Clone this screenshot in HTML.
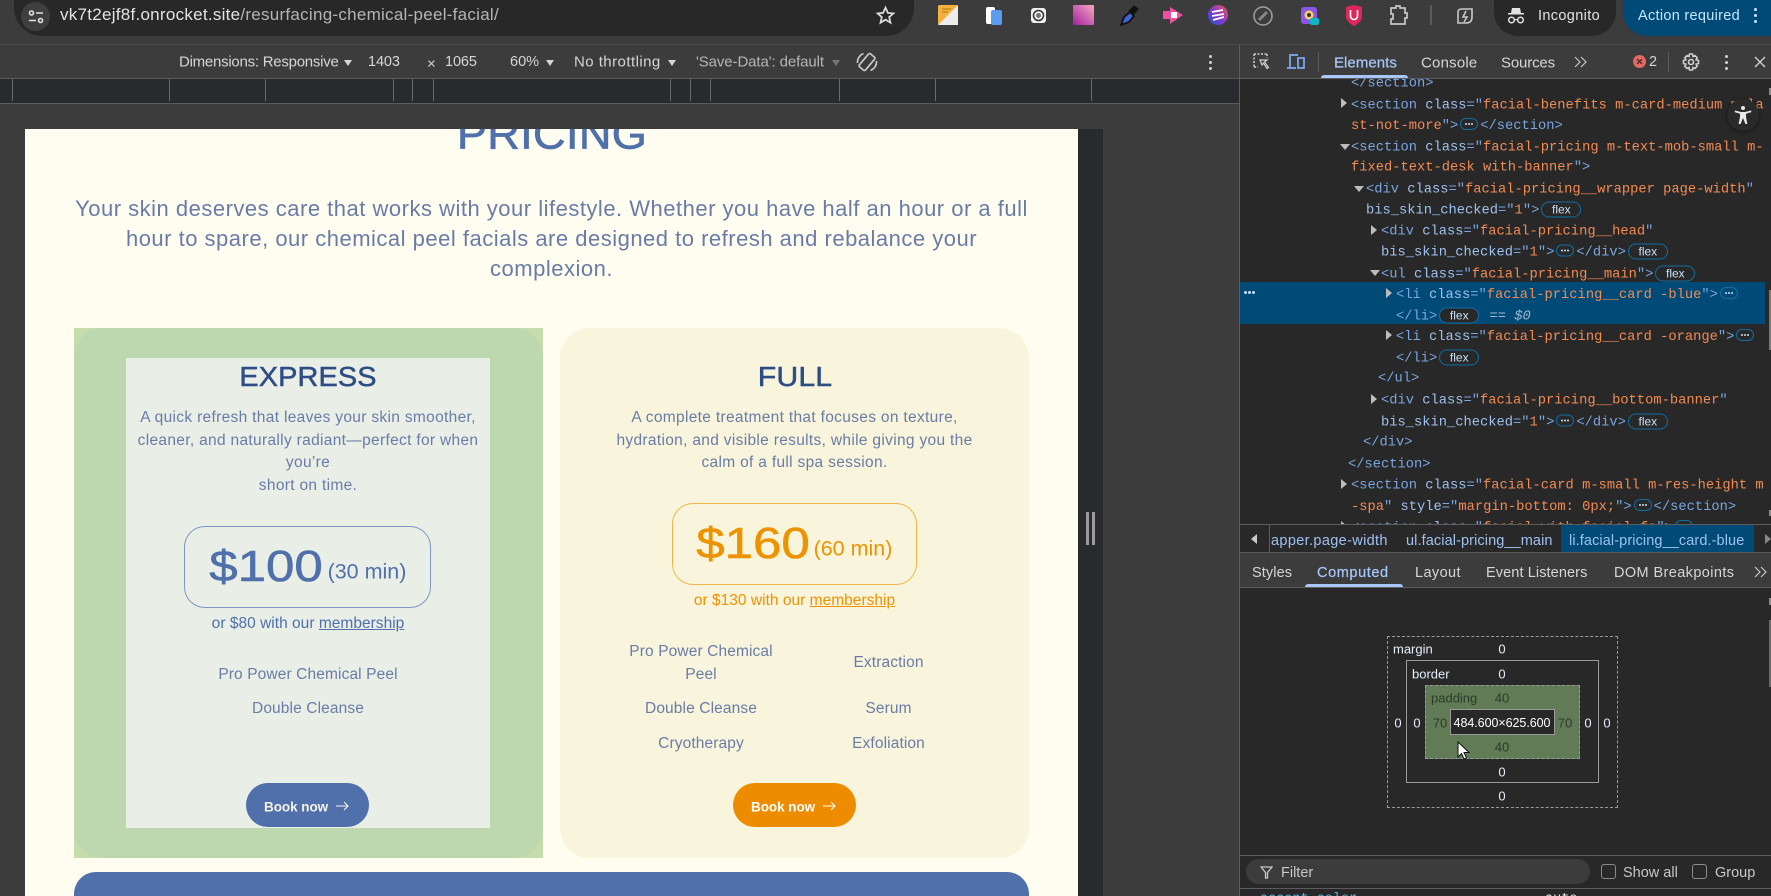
<!DOCTYPE html>
<html><head><meta charset="utf-8"><style>
html,body{margin:0;padding:0;width:1771px;height:896px;overflow:hidden;background:#3c3c3c;font-family:"Liberation Sans",sans-serif}
.a{position:absolute}
.t{position:absolute;white-space:nowrap;transform:translateY(-50%)}
.c{position:absolute;white-space:nowrap;transform:translate(-50%,-50%);margin-top:1px}
.ui{color:#d6d6d6;font-size:15px}
.m{position:absolute;white-space:nowrap;transform:translateY(-50%);margin-top:1.5px;font-family:"Liberation Mono",monospace;font-size:13.75px;color:#7aa5e0}
.m i{font-style:normal;color:#9ec1f0}.m b{font-weight:normal;color:#f28b54}
.e{display:inline-block;width:16px;height:10px;border:1px solid #0f6ea6;border-radius:6px;vertical-align:-1px;margin:0 2px;position:relative}
.e:after{content:"";position:absolute;left:4px;top:4px;width:2px;height:2px;background:#c7e0f5;border-radius:50%;box-shadow:3px 0 #c7e0f5,6px 0 #c7e0f5}
.f{display:inline-block;width:38px;height:14px;border:1px solid #0f6ea6;border-radius:8px;font:12px/14px "Liberation Sans",sans-serif;color:#c7e0f5;text-align:center;vertical-align:0;margin:0 2px}
.r,.d{position:absolute;width:0;height:0;margin-top:1px}
.r{border-left:6px solid #bdbdbd;border-top:5px solid transparent;border-bottom:5px solid transparent}
.d{border-top:6px solid #bdbdbd;border-left:5px solid transparent;border-right:5px solid transparent}
.tick{position:absolute;top:79px;height:22px;width:1px;background:#6a6a6a}
.p{font-size:15.5px;color:#6a7ca6;letter-spacing:.32px}
.q{font-size:15.5px;color:#6a7ca6;letter-spacing:.12px}
.h{font-size:27.5px;color:#2f4d85;-webkit-text-stroke:.5px #2f4d85;letter-spacing:.1px}
.box{position:absolute;box-sizing:border-box;border-radius:21px}
.tri{position:absolute;width:0;height:0;border-top:4px solid #b5b5b5;border-left:4px solid transparent;border-right:4px solid transparent}
.b{color:#e4eefa;font-size:13px;margin-top:0}.g{color:#2e3a2a;font-size:13px;margin-top:0}
.btn{position:absolute;border-radius:22px;height:44px;top:783px}
</style></head><body>

<!-- top chrome -->
<div class="a" style="left:14px;top:-20px;width:900px;height:56px;background:#282828;border-radius:0 0 28px 28px"></div>
<div class="a" style="left:21px;top:2px;width:29px;height:29px;border-radius:50%;background:#3f3f3f"></div>
<svg class="a" style="left:27px;top:9px" width="18" height="16" viewBox="0 0 18 16" fill="none" stroke="#e0e0e0" stroke-width="1.6"><circle cx="4.5" cy="4" r="2"/><path d="M9 4h7M2 11.5h7"/><circle cx="13.5" cy="11.5" r="2"/></svg>
<div class="t" style="left:60px;top:15px;font-size:17px;color:#e3e3e3;letter-spacing:.27px">vk7t2ejf8f.onrocket.site<span style="color:#b4b4b4">/resurfacing-chemical-peel-facial/</span></div>
<svg class="a" style="left:875px;top:5px" width="21" height="21" viewBox="0 0 24 24" fill="none" stroke="#dcdcdc" stroke-width="2"><path d="M12 3l2.7 6 6.3.6-4.8 4.2 1.5 6.4L12 16.800l-5.700 3.400 1.500-6.400L3 9.600 9.300 9z"/></svg>

<!-- extension icons -->
<svg class="a" style="left:925px;top:0" width="520" height="36" viewBox="0 0 520 36">
 <path d="M13 6a2 2 0 0 1 2-1h16a2 2 0 0 1 2 2v16a2 2 0 0 1-2 2H15a2 2 0 0 1-2-2z" fill="#f5b13d"/>
 <path d="M33 5v20H13z" fill="#ececec"/><path d="M17 9h9M17 12h6" stroke="#a9761d" stroke-width="1"/>
 <rect x="61" y="7" width="9" height="17" rx="2" fill="#fff"/><rect x="66" y="10" width="11" height="15" rx="2" fill="#5b9bf0"/>
 <rect x="106" y="8" width="15" height="15" rx="3" fill="#f0f0f0"/><circle cx="113.500" cy="15.500" r="5" fill="none" stroke="#333" stroke-width="1.500"/><circle cx="113.500" cy="15.500" r="2.500" fill="#777"/>
 <defs><linearGradient id="gp" x1="1" y1="0" x2="0" y2="1"><stop offset="0" stop-color="#f5a8c0"/><stop offset="1" stop-color="#a5209e"/></linearGradient>
 <linearGradient id="gb" x1="1" y1="0" x2="0" y2="1"><stop offset="0" stop-color="#ef5a4c"/><stop offset=".5" stop-color="#8a38c8"/><stop offset="1" stop-color="#1d52d8"/></linearGradient></defs>
 <rect x="148" y="5" width="21" height="20" rx="1" fill="url(#gp)"/>
 <path d="M196 25l3-8 6-5 4 4-5 6z" fill="#3f63d8" stroke="#111" stroke-width="1.800"/><path d="M204 11l5-5 4 3-5 6z" fill="#111" stroke="#111"/>
 <path d="M238 11h7V7l13 8-13 9v-5h-7z" fill="#ee4fa1"/><rect x="246" y="12" width="6" height="6" fill="#fff"/>
 <circle cx="293" cy="15" r="10" fill="url(#gb)"/><path d="M287 12l11-2M287 16l12-2M288 20l11-3" stroke="#fff" stroke-width="1.700"/>
 <circle cx="338" cy="16" r="9" fill="none" stroke="#a0a0a0" stroke-width="1.500"/><path d="M334 20l8-8" stroke="#888" stroke-width="3"/>
 <rect x="376" y="7" width="16" height="17" rx="3" fill="#8a56e8"/><circle cx="384" cy="15" r="4.500" fill="#f4d35e"/><circle cx="384" cy="15" r="2" fill="#333"/><rect x="385" y="18" width="9" height="7" rx="2" fill="#10b5c4"/>
 <path d="M421 7l8-2 8 2v11q-2 5-8 8-6-3-8-8z" fill="#e0265f"/><path d="M425.500 10v6a3.500 3.500 0 0 0 7 0v-6" fill="none" stroke="#fff" stroke-width="1.600"/>
 <path d="M466 8h5v-2h4v2h5v5h2v5h-2v6h-14v-5h2v-5h-2z" fill="none" stroke="#c8c8c8" stroke-width="1.700"/>
 <rect x="505" y="5" width="2" height="20" fill="#5a5a5a"/>
</svg>
<svg class="a" style="left:1454px;top:5px" width="22" height="22" viewBox="0 0 22 22" fill="none" stroke="#c8c8c8" stroke-width="1.600"><path d="M4 7q0-3 4-3h10v8q0 6-6 6H4z"/><path d="M12 6l-3 6h4l-3 5"/></svg>
<div class="a" style="left:1494px;top:-20px;width:122px;height:56px;background:#282828;border-radius:0 0 24px 24px"></div>
<svg class="a" style="left:1506px;top:6px" width="20" height="20" viewBox="0 0 20 20" fill="#e3e3e3"><path d="M6 2h8l1 5h3v1.500H2V7h3z"/><circle cx="5.500" cy="14" r="2.800" fill="none" stroke="#e3e3e3" stroke-width="1.500"/><circle cx="14.500" cy="14" r="2.800" fill="none" stroke="#e3e3e3" stroke-width="1.500"/><path d="M8 13h4v1.200H8z"/></svg>
<div class="t ui" style="left:1538px;top:16px;color:#e3e3e3;font-size:14.500px;letter-spacing:.35px">Incognito</div>
<div class="a" style="left:1623px;top:-20px;width:148px;height:56px;background:#004a77;border-radius:24px 0 0 24px"></div>
<div class="t ui" style="left:1638px;top:16px;color:#c2e7ff;font-size:14.500px;letter-spacing:.3px">Action required</div>
<div class="a" style="left:1754px;top:8px;width:3px;height:3px;background:#c2e7ff;border-radius:50%;box-shadow:0 6px #c2e7ff,0 12px #c2e7ff"></div>

<div class="a" style="left:0;top:44px;width:1771px;height:1px;background:#4a4a4a"></div>

<!-- device toolbar -->
<div class="t ui" style="left:179px;top:62px;letter-spacing:-.25px">Dimensions: Responsive</div>
<div class="tri" style="left:344px;top:60px;border-top-width:6px;border-top-color:#d6d6d6"></div>
<div class="t ui" style="left:368px;top:62px;font-size:14.500px;letter-spacing:-.1px">1403</div>
<div class="t ui" style="left:427px;top:64px;font-size:15px">×</div>
<div class="t ui" style="left:445px;top:62px;font-size:14.500px;letter-spacing:-.1px">1065</div>
<div class="t ui" style="left:510px;top:62px;font-size:14.500px">60%</div>
<div class="tri" style="left:546px;top:60px;border-top-width:6px;border-top-color:#d6d6d6"></div>
<div class="t ui" style="left:574px;top:62px;letter-spacing:.45px">No throttling</div>
<div class="tri" style="left:668px;top:60px;border-top-width:6px;border-top-color:#d6d6d6"></div>
<div class="t ui" style="left:696px;top:62px;letter-spacing:-.1px;color:#b5b5b5">'Save-Data': default</div>
<div class="tri" style="left:832px;top:60px;border-top-width:6px;border-top-color:#777"></div>
<svg class="a" style="left:855px;top:50px" width="24" height="24" viewBox="0 0 24 24" fill="none" stroke="#c8c8c8" stroke-width="1.700"><rect x="8" y="3.500" width="8" height="17" rx="1.500" transform="rotate(40 12 12)"/><path d="M2.500 13a9.500 9.500 0 0 1 6-9.500M21.500 11a9.500 9.500 0 0 1-6 9.500"/></svg>
<div class="a" style="left:1209px;top:55px;width:3px;height:3px;background:#d0d0d0;border-radius:50%;box-shadow:0 6px #d0d0d0,0 12px #d0d0d0"></div>

<div class="a" style="left:0;top:78px;width:1240px;height:1px;background:#5c5c5c"></div>
<div class="a" style="left:0;top:79px;width:1240px;height:24px;background:#292a2d"></div>
<div class="a" style="left:0;top:103px;width:1240px;height:1px;background:#5c5c5c"></div>
<div class="tick" style="left:12px"></div><div class="tick" style="left:169px"></div><div class="tick" style="left:265px"></div><div class="tick" style="left:393px"></div><div class="tick" style="left:412px"></div><div class="tick" style="left:433px"></div><div class="tick" style="left:670px"></div><div class="tick" style="left:690px"></div><div class="tick" style="left:710px"></div><div class="tick" style="left:839px"></div><div class="tick" style="left:935px"></div><div class="tick" style="left:1091px"></div>

<!-- page -->
<div class="a" style="left:1078px;top:129px;width:25px;height:767px;background:#292a2d"></div>
<div class="a" style="left:1086px;top:512px;width:3px;height:33px;background:#9a9a9a"></div>
<div class="a" style="left:1092px;top:512px;width:3px;height:33px;background:#9a9a9a"></div>
<div class="a" style="left:25px;top:129px;width:1053px;height:767px;background:#fffdf0;overflow:hidden">
 <div class="c" style="left:526.500px;top:5px;font-size:43px;line-height:43px;color:#5070ab;-webkit-text-stroke:.7px #5070ab;letter-spacing:.3px;transform:translate(-50%,-50%) scaleX(1.05)">PRICING</div>
</div>
<div class="c" style="left:551.500px;top:208px;font-size:22px;color:#6a7ca6;letter-spacing:.5px">Your skin deserves care that works with your lifestyle. Whether you have half an hour or a full</div>
<div class="c" style="left:551.500px;top:238px;font-size:22px;color:#6a7ca6;letter-spacing:.5px">hour to spare, our chemical peel facials are designed to refresh and rebalance your</div>
<div class="c" style="left:551.500px;top:268px;font-size:22px;color:#6a7ca6;letter-spacing:.5px">complexion.</div>

<!-- green card -->
<div class="a" style="left:74px;top:328px;width:469px;height:530px;background:#c6dcad"></div>
<div class="a" style="left:74px;top:328px;width:469px;height:530px;background:#bdd7ae;border-radius:30px"></div>
<div class="a" style="left:126px;top:358px;width:364px;height:470px;background:#e9eee7"></div>
<div class="c h" style="left:308px;top:376px;transform:translate(-50%,-50%) scaleX(1.05)">EXPRESS</div>
<div class="c p" style="left:308px;top:417px">A quick refresh that leaves your skin smoother,</div>
<div class="c p" style="left:308px;top:440px">cleaner, and naturally radiant—perfect for when</div>
<div class="c p" style="left:308px;top:462px">you’re</div>
<div class="c p" style="left:308px;top:485px">short on time.</div>
<div class="box" style="left:184px;top:526px;width:247px;height:82px;border:1px solid #7f96c4"></div>
<div class="c" style="left:266px;top:566px;font-size:44px;color:#5070ab;-webkit-text-stroke:.6px #5070ab;transform:translate(-50%,-50%) scaleX(1.16)">$100</div>
<div class="c" style="left:367px;top:571px;font-size:21.500px;color:#5070ab">(30 min)</div>
<div class="c" style="left:308px;top:623px;font-size:15.500px;color:#5070ab;letter-spacing:.02px">or $80 with our <u>membership</u></div>
<div class="c q" style="left:308px;top:674px">Pro Power Chemical Peel</div>
<div class="c q" style="left:308px;top:708px">Double Cleanse</div>
<div class="btn" style="left:246px;width:123px;background:#5070ab"></div>
<div class="t" style="left:264px;top:807px;font-size:13.500px;font-weight:bold;color:#f4f2e4;letter-spacing:-.05px">Book now</div>
<svg class="a" style="left:336px;top:800px" width="13" height="12" viewBox="0 0 13 12" fill="none" stroke="#f4f2e4" stroke-width="1.100"><path d="M0 6h12M8 2l4 4-4 4"/></svg>

<!-- full card -->
<div class="a" style="left:560px;top:328px;width:469px;height:530px;background:#f8f5dc;border-radius:30px"></div>
<div class="c h" style="left:794.500px;top:376px;transform:translate(-50%,-50%) scaleX(1.1)">FULL</div>
<div class="c p" style="left:794.500px;top:417px">A complete treatment that focuses on texture,</div>
<div class="c p" style="left:794.500px;top:440px">hydration, and visible results, while giving you the</div>
<div class="c p" style="left:794.500px;top:462px">calm of a full spa session.</div>
<div class="box" style="left:672px;top:503px;width:245px;height:82px;border:1px solid #f0b54a"></div>
<div class="c" style="left:752.500px;top:543px;font-size:44px;color:#ee9300;-webkit-text-stroke:.6px #ee9300;transform:translate(-50%,-50%) scaleX(1.16)">$160</div>
<div class="c" style="left:853px;top:548px;font-size:21.500px;color:#ee9300">(60 min)</div>
<div class="c" style="left:794.500px;top:600px;font-size:15.500px;color:#ee9300;letter-spacing:.02px">or $130 with our <u>membership</u></div>
<div class="c q" style="left:701px;top:651px">Pro Power Chemical</div>
<div class="c q" style="left:701px;top:674px">Peel</div>
<div class="c q" style="left:888.500px;top:662px">Extraction</div>
<div class="c q" style="left:701px;top:708px">Double Cleanse</div>
<div class="c q" style="left:888.500px;top:708px">Serum</div>
<div class="c q" style="left:701px;top:743px">Cryotherapy</div>
<div class="c q" style="left:888.500px;top:743px">Exfoliation</div>
<div class="btn" style="left:733px;width:123px;background:#ee8c00"></div>
<div class="t" style="left:751px;top:807px;font-size:13.500px;font-weight:bold;color:#fff;letter-spacing:-.05px">Book now</div>
<svg class="a" style="left:823px;top:800px" width="13" height="12" viewBox="0 0 13 12" fill="none" stroke="#fff" stroke-width="1.100"><path d="M0 6h12M8 2l4 4-4 4"/></svg>
<div class="a" style="left:74px;top:872px;width:955px;height:24px;background:#5070ab;border-radius:22px 22px 0 0"></div>

<!-- devtools -->
<div class="a" style="left:1239px;top:45px;width:1px;height:851px;background:#5c5c5c"></div>
<div class="a" style="left:1240px;top:45px;width:531px;height:33px;background:#3c3c3c"></div>
<div class="a" style="left:1240px;top:78px;width:531px;height:1px;background:#5c5c5c"></div>
<div class="a" style="left:1240px;top:79px;width:531px;height:817px;background:#282828"></div>

<svg class="a" style="left:1252px;top:52px" width="20" height="20" viewBox="0 0 20 20" fill="none" stroke="#cfcfcf" stroke-width="1.500"><path d="M2 2h13M2 2v13M15 2v4M2 15h4" stroke-dasharray="2 1.500"/><path d="M8 8h7l-2.500 2 4 5.500-1.500 1-3.500-5.500L10 13z" stroke-width="1.200"/></svg>
<svg class="a" style="left:1286px;top:52px" width="20" height="20" viewBox="0 0 20 20" fill="none" stroke="#7cacf8" stroke-width="1.700"><path d="M4 15V3h8M1 16h9"/><rect x="12" y="6" width="6" height="10"/></svg>
<div class="a" style="left:1318px;top:52px;width:1px;height:20px;background:#5c5c5c"></div>
<div class="t" style="left:1334px;top:63px;font-size:15px;color:#a8c7fa;letter-spacing:.05px;-webkit-text-stroke:.2px #a8c7fa">Elements</div>
<div class="a" style="left:1321px;top:75px;width:87px;height:3px;background:#a8c7fa;border-radius:3px 3px 0 0"></div>
<div class="t ui" style="left:1421px;top:63px;letter-spacing:.2px">Console</div>
<div class="t ui" style="left:1501px;top:63px;letter-spacing:-.15px">Sources</div>
<svg class="a" style="left:1573px;top:56px" width="15" height="12" viewBox="0 0 15 12" fill="none" stroke="#c8c8c8" stroke-width="1.200"><path d="M2 1l5 5-5 5M8 1l5 5-5 5"/></svg>
<div class="a" style="left:1633px;top:55px;width:13px;height:13px;border-radius:50%;background:#e46962"></div>
<svg class="a" style="left:1636px;top:58px" width="7" height="7" viewBox="0 0 7 7" stroke="#3a2020" stroke-width="1.200"><path d="M1 1l5 5M6 1l-5 5"/></svg>
<div class="t ui" style="left:1649px;top:62px;font-size:14.500px">2</div>
<div class="a" style="left:1668px;top:52px;width:1px;height:20px;background:#5c5c5c"></div>
<svg class="a" style="left:1681px;top:52px" width="20" height="20" viewBox="0 0 20 20" fill="none" stroke="#cfcfcf" stroke-width="1.600"><path d="M8.500 2h3l.5 2.500 2-.9 2.200 2.200-1.100 2 2.400.7v3l-2.400.7 1.100 2-2.200 2.200-2-.9-.5 2.500h-3L8 15.500l-2 .9-2.200-2.200 1.100-2-2.400-.7v-3l2.400-.7-1.100-2L6 3.600l2 .9z"/><circle cx="10" cy="10" r="2.500"/></svg>
<div class="a" style="left:1725px;top:55px;width:3px;height:3px;background:#d0d0d0;border-radius:50%;box-shadow:0 6px #d0d0d0,0 12px #d0d0d0"></div>
<svg class="a" style="left:1754px;top:56px" width="12" height="12" viewBox="0 0 12 12" stroke="#d0d0d0" stroke-width="1.400"><path d="M1 1l10 10M11 1L1 11"/></svg>

<div class="m" style="left:1351px;top:82px">&lt;/section&gt;</div>
<div class="r" style="left:1341px;top:97px"></div>
<div class="m" style="left:1351px;top:104px">&lt;section <i>class</i>="<b>facial-benefits m-card-medium m-la</b></div>
<div class="m" style="left:1351px;top:124px"><b>st-not-more</b>"&gt;<span class="e"></span>&lt;/section&gt;</div>
<div class="d" style="left:1340px;top:143px"></div>
<div class="m" style="left:1351px;top:146px">&lt;section <i>class</i>="<b>facial-pricing m-text-mob-small m-</b></div>
<div class="m" style="left:1351px;top:166px"><b>fixed-text-desk with-banner</b>"&gt;</div>
<div class="d" style="left:1354px;top:185px"></div>
<div class="m" style="left:1366px;top:188px">&lt;div <i>class</i>="<b>facial-pricing__wrapper page-width</b>"</div>
<div class="m" style="left:1366px;top:208px"><i>bis_skin_checked</i>="<b>1</b>"&gt;<span class="f">flex</span></div>
<div class="r" style="left:1371px;top:224px"></div>
<div class="m" style="left:1381px;top:230px">&lt;div <i>class</i>="<b>facial-pricing__head</b>"</div>
<div class="m" style="left:1381px;top:250px"><i>bis_skin_checked</i>="<b>1</b>"&gt;<span class="e"></span>&lt;/div&gt;<span class="f">flex</span></div>
<div class="d" style="left:1370px;top:269px"></div>
<div class="m" style="left:1381px;top:272px">&lt;ul <i>class</i>="<b>facial-pricing__main</b>"&gt;<span class="f">flex</span></div>

<div class="a" style="left:1240px;top:282px;width:525px;height:42px;background:#004a77"></div>
<div class="a" style="left:1244px;top:291px;width:3px;height:3px;background:#c7e0f5;border-radius:50%;box-shadow:4px 0 #c7e0f5,8px 0 #c7e0f5"></div>
<div class="r" style="left:1386px;top:287px"></div>
<div class="m" style="left:1396px;top:293px">&lt;li <i>class</i>="<b>facial-pricing__card -blue</b>"&gt;<span class="e"></span></div>
<div class="m" style="left:1396px;top:314px">&lt;/li&gt;<span class="f" style="background:#282828">flex</span> <span style="color:#9db8cf">== <em>$0</em></span></div>
<div class="r" style="left:1386px;top:329px"></div>
<div class="m" style="left:1396px;top:335px">&lt;li <i>class</i>="<b>facial-pricing__card -orange</b>"&gt;<span class="e"></span></div>
<div class="m" style="left:1396px;top:356px">&lt;/li&gt;<span class="f">flex</span></div>
<div class="m" style="left:1378px;top:377px">&lt;/ul&gt;</div>
<div class="r" style="left:1371px;top:393px"></div>
<div class="m" style="left:1381px;top:399px">&lt;div <i>class</i>="<b>facial-pricing__bottom-banner</b>"</div>
<div class="m" style="left:1381px;top:420px"><i>bis_skin_checked</i>="<b>1</b>"&gt;<span class="e"></span>&lt;/div&gt;<span class="f">flex</span></div>
<div class="m" style="left:1363px;top:441px">&lt;/div&gt;</div>
<div class="m" style="left:1348px;top:463px">&lt;/section&gt;</div>
<div class="r" style="left:1341px;top:478px"></div>
<div class="m" style="left:1351px;top:484px">&lt;section <i>class</i>="<b>facial-card m-small m-res-height m</b></div>
<div class="m" style="left:1351px;top:505px"><b>-spa</b>" <i>style</i>="<b>margin-bottom: 0px;</b>"&gt;<span class="e"></span>&lt;/section&gt;</div>
<div class="r" style="left:1341px;top:520px"></div>
<div class="m" style="left:1351px;top:526px">&lt;section <i>class</i>="<b>facial-with facial-fa</b>"&gt;<span class="e"></span></div>

<!-- accessibility -->
<div class="a" style="left:1727px;top:99px;width:32px;height:32px;border-radius:50%;background:#2a2a2a;box-shadow:0 1px 4px rgba(0,0,0,.5)"></div>
<svg class="a" style="left:1733px;top:105px" width="20" height="20" viewBox="0 0 20 20" fill="#e8e8e8"><circle cx="10" cy="3" r="2"/><path d="M2 5.500l6 1.500h4l6-1.500.4 1.600L13 8.800V12l1.400 7h-2L10 13l-2.400 6h-2L7 12V8.800L1.600 7.100z"/></svg>

<!-- breadcrumb -->
<div class="a" style="left:1240px;top:524px;width:531px;height:29px;background:#282828;border-top:1px solid #5c5c5c;border-bottom:1px solid #5c5c5c;box-sizing:border-box"></div>
<div class="a" style="left:1240px;top:525px;width:30px;height:27px;box-sizing:border-box;border-right:1px solid #5c5c5c"></div>
<div class="a" style="left:1251px;top:534px;width:0;height:0;border-right:6px solid #c8c8c8;border-top:5px solid transparent;border-bottom:5px solid transparent"></div>
<div class="t" style="left:1271px;top:541px;font-size:14.500px;color:#9ec1f0;letter-spacing:.35px">apper.page-width</div>
<div class="t" style="left:1406px;top:541px;font-size:14.500px;color:#9ec1f0;letter-spacing:.1px">ul.facial-pricing__main</div>
<div class="a" style="left:1561px;top:525px;width:193px;height:27px;background:#004a77"></div>
<div class="t" style="left:1569px;top:541px;font-size:14.500px;color:#9ec1f0;letter-spacing:.1px">li.facial-pricing__card.-blue</div>
<div class="a" style="left:1765px;top:534px;width:0;height:0;border-left:6px solid #888;border-top:5px solid transparent;border-bottom:5px solid transparent"></div>

<!-- sub tabs -->
<div class="a" style="left:1240px;top:553px;width:531px;height:34px;background:#3c3c3c"></div>
<div class="a" style="left:1240px;top:587px;width:531px;height:1px;background:#5c5c5c"></div>
<div class="t ui" style="left:1252px;top:573px;font-size:14.500px;letter-spacing:.1px">Styles</div>
<div class="t ui" style="left:1317px;top:573px;font-size:14.500px;color:#a8c7fa;letter-spacing:.6px;-webkit-text-stroke:.2px #a8c7fa">Computed</div>
<div class="a" style="left:1305px;top:584px;width:98px;height:3px;background:#a8c7fa;border-radius:3px 3px 0 0"></div>
<div class="t ui" style="left:1415px;top:573px;font-size:14.500px;letter-spacing:.4px">Layout</div>
<div class="t ui" style="left:1486px;top:573px;font-size:14.500px;letter-spacing:.1px">Event Listeners</div>
<div class="t ui" style="left:1614px;top:573px;font-size:14.500px;letter-spacing:.4px">DOM Breakpoints</div>
<svg class="a" style="left:1753px;top:566px" width="15" height="12" viewBox="0 0 15 12" fill="none" stroke="#c8c8c8" stroke-width="1.200"><path d="M2 1l5 5-5 5M8 1l5 5-5 5"/></svg>

<!-- box model -->
<div class="a" style="left:1387px;top:636px;width:231px;height:172px;box-sizing:border-box;border:1px dashed #9a9a9a"></div>
<div class="a" style="left:1406px;top:660px;width:193px;height:123px;box-sizing:border-box;border:1px solid #9a9a9a"></div>
<div class="a" style="left:1425px;top:685px;width:155px;height:74px;box-sizing:border-box;border:1px dashed #9a9a9a;background:#607b55"></div>
<div class="a" style="left:1450px;top:709px;width:105px;height:26px;box-sizing:border-box;border:1px solid #9a9a9a;background:#282828"></div>
<div class="t b" style="left:1393px;top:649px">margin</div>
<div class="c b" style="left:1502px;top:649px">0</div>
<div class="t b" style="left:1412px;top:674px">border</div>
<div class="c b" style="left:1502px;top:674px">0</div>
<div class="t g" style="left:1431px;top:698px">padding</div>
<div class="c g" style="left:1502px;top:698px">40</div>
<div class="c b" style="left:1398px;top:723px">0</div>
<div class="c b" style="left:1417px;top:723px">0</div>
<div class="c g" style="left:1440px;top:723px">70</div>
<div class="c" style="left:1502px;top:722px;font-size:12.500px;color:#fff;letter-spacing:-.05px">484.600×625.600</div>
<div class="c g" style="left:1565px;top:723px">70</div>
<div class="c b" style="left:1588px;top:723px">0</div>
<div class="c b" style="left:1607px;top:723px">0</div>
<div class="c g" style="left:1502px;top:747px">40</div>
<div class="c b" style="left:1502px;top:772px">0</div>
<div class="c b" style="left:1502px;top:796px">0</div>
<svg class="a" style="left:1457px;top:741px" width="13" height="19" viewBox="0 0 13 19"><path d="M1 1v15l3.500-3.500 2.500 5.500 2.500-1-2.500-5.500H12z" fill="#fff" stroke="#111" stroke-width="1"/></svg>

<!-- filter -->
<div class="a" style="left:1240px;top:855px;width:531px;height:1px;background:#5c5c5c"></div>
<div class="a" style="left:1246px;top:859px;width:344px;height:25px;border-radius:13px;background:#3c3c3c"></div>
<svg class="a" style="left:1260px;top:866px" width="13" height="13" viewBox="0 0 13 13" fill="none" stroke="#c8c8c8" stroke-width="1.300"><path d="M1 1h11L7.500 6.500V12h-2V6.500z"/></svg>
<div class="t ui" style="left:1281px;top:873px;font-size:14.500px;color:#c8c8c8">Filter</div>
<div class="a" style="left:1601px;top:864px;width:15px;height:15px;box-sizing:border-box;border:1px solid #8a8a8a;border-radius:3px"></div>
<div class="t ui" style="left:1623px;top:873px;font-size:14.500px;color:#c8c8c8">Show all</div>
<div class="a" style="left:1692px;top:864px;width:15px;height:15px;box-sizing:border-box;border:1px solid #8a8a8a;border-radius:3px"></div>
<div class="t ui" style="left:1715px;top:873px;font-size:14.500px;color:#c8c8c8">Group</div>
<div class="a" style="left:1240px;top:888px;width:531px;height:1px;background:#5c5c5c"></div>
<div class="a" style="left:1240px;top:889px;width:531px;height:7px;overflow:hidden;font-family:'Liberation Mono',monospace;font-size:13.500px;line-height:16px">
 <div class="a" style="left:20px;top:3px;color:#5db0d7;white-space:nowrap">accent-color</div>
 <div class="a" style="left:305px;top:3px;color:#e3e3e3;white-space:nowrap">auto</div>
</div>

<!-- scrollbar bits -->
<div class="a" style="left:1769px;top:88px;width:2px;height:7px;background:#8a8a8a"></div>
<div class="a" style="left:1769px;top:290px;width:2px;height:60px;background:#7a7a7a"></div>
<div class="a" style="left:1769px;top:510px;width:2px;height:6px;background:#8a8a8a"></div>
<div class="a" style="left:1769px;top:598px;width:2px;height:7px;background:#8a8a8a"></div>
<div class="a" style="left:1769px;top:620px;width:2px;height:67px;background:#6a6a6a"></div>
</body></html>
